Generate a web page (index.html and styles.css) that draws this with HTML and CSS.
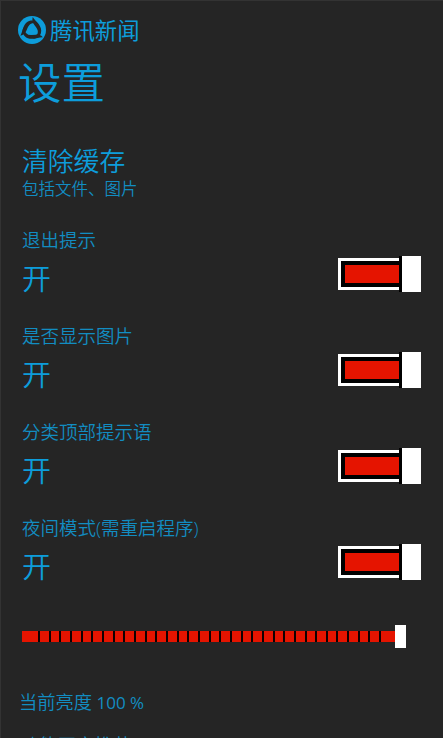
FILE: index.html
```html
<!DOCTYPE html>
<html lang="zh-CN">

<head>
    <meta charset="UTF-8">
    <meta name="viewport" content="width=device-width, initial-scale=1.0">
    <title>腾讯新闻 - 设置</title>
    <link rel="stylesheet" href="styles.css">
</head>

<body>
    <div class="page">
        <div class="brand">
            <svg class="logo" viewBox="0 0 28 28">
                <circle cx="14" cy="14" r="14" fill="#0d9ddb" />
                <g fill="#252525">
                    <path d="M2.4 19.8C5 16 4.6 6.4 12.6 4.6C17 3.8 20 6 20.6 9.6C17.6 6.6 13.6 6.6 11.2 9.2C8.4 12.4 8.6 18.4 2.4 19.8Z" />
                    <path d="M2.4 19.8C5 16 4.6 6.4 12.6 4.6C17 3.8 20 6 20.6 9.6C17.6 6.6 13.6 6.6 11.2 9.2C8.4 12.4 8.6 18.4 2.4 19.8Z" transform="rotate(120 14 14)" />
                    <path d="M2.4 19.8C5 16 4.6 6.4 12.6 4.6C17 3.8 20 6 20.6 9.6C17.6 6.6 13.6 6.6 11.2 9.2C8.4 12.4 8.6 18.4 2.4 19.8Z" transform="rotate(240 14 14)" />
                </g>
                <path fill="#0d9ddb" d="M14 9C16.6 9 17.6 10.8 17.9 13C19.6 14.4 19.4 17 17.6 18.4H10.4C8.6 17 8.4 14.4 10.1 13C10.4 10.8 11.4 9 14 9Z" />
            </svg>
            <span class="brand-name">腾讯新闻</span>
        </div>
        <h1>设置</h1>

        <div class="cache">
            <h2>清除缓存</h2>
            <p>包括文件、图片</p>
        </div>

        <div class="item">
            <div class="label">退出提示</div>
            <div class="row">
                <span class="state">开</span>
                <div class="switch"><div class="track"><div class="fill"></div></div><div class="thumb"></div></div>
            </div>
        </div>
        <div class="item">
            <div class="label">是否显示图片</div>
            <div class="row">
                <span class="state">开</span>
                <div class="switch"><div class="track"><div class="fill"></div></div><div class="thumb"></div></div>
            </div>
        </div>
        <div class="item">
            <div class="label">分类顶部提示语</div>
            <div class="row">
                <span class="state">开</span>
                <div class="switch"><div class="track"><div class="fill"></div></div><div class="thumb"></div></div>
            </div>
        </div>
        <div class="item">
            <div class="label">夜间模式(需重启程序)</div>
            <div class="row">
                <span class="state">开</span>
                <div class="switch"><div class="track"><div class="fill"></div></div><div class="thumb"></div></div>
            </div>
        </div>

        <!-- 亮度 -->
        <div class="slider">
            <div class="slider-first"></div>
            <div class="slider-ticks"></div>
            <div class="slider-last"></div>
            <div class="slider-thumb"></div>
        </div>
        <div class="brightness">当前亮度<span class="percent"> 100 %</span></div>
        <div class="more">功能正文推荐</div>
    </div>
</body>

</html>
```

FILE: styles.css
```css
* {
    box-sizing: border-box;
    margin: 0;
    padding: 0;
}

body {
    background-color: #252525;
    color: #0d9ddb;
    font-family: "Open Sans", "Noto Sans CJK SC", sans-serif;
    font-weight: 350;
}

.page {
    height: 738px;
    overflow: hidden;
    padding: 14px 22px 0 21px;
    border-left: 1px solid #333;
    border-top: 1px solid #333;
}

.brand {
    display: flex;
    align-items: center;
    height: 30px;
    margin-left: -4px;
}

.logo {
    width: 28px;
    height: 28px;
}

.brand-name {
    margin-left: 4px;
    padding-top: 2px;
    font-size: 22.4px;
    font-weight: 400;
    line-height: 28px;
}

h1 {
    height: 60px;
    margin: 8px 0 0 -4px;
    font-size: 43.5px;
    font-weight: 350;
    line-height: 59px;
}

.cache {
    height: 115px;
    margin-top: 31px;
}

.cache h2 {
    font-size: 25.8px;
    font-weight: 350;
    line-height: 34px;
}

.cache p {
    font-size: 16.5px;
    line-height: 22px;
    color: #128dc2;
}

.item {
    height: 96px;
}

.cache + .item {
    margin-top: -30px;
}

.label {
    font-size: 18.5px;
    line-height: 22px;
    white-space: nowrap;
    color: #128dc2;
}

.row {
    display: flex;
    justify-content: space-between;
    height: 50px;
}

.state {
    font-size: 29px;
    line-height: 56px;
}

.switch {
    display: flex;
    align-items: center;
    width: 83px;
    height: 36px;
    margin-top: 5px;
}

.track {
    width: 61px;
    height: 32px;
    background-color: #000;
    border: 3px solid #fff;
    border-right: none;
    padding: 4px 0 4px 4px;
}

.fill {
    height: 18px;
    background-color: #e51400;
}

.thumb {
    width: 22px;
    height: 36px;
    background-color: #fff;
    border-left: 3px solid #000;
}

.slider {
    display: flex;
    align-items: center;
    height: 23px;
    margin-top: 12px;
}

.slider-first {
    width: 16px;
    height: 11px;
    background-color: #e51400;
}

.slider-ticks {
    width: 343px;
    height: 11px;
    background: repeating-linear-gradient(to right, #100000 0, #100000 2px, #e51400 2px, #e51400 10.66px);
}

.slider-last {
    width: 14px;
    height: 11px;
    background-color: #e51400;
}

.slider-thumb {
    width: 11px;
    height: 23px;
    background-color: #fff;
}

.brightness {
    margin: 42px 0 0 -3px;
    font-size: 18.3px;
    line-height: 24px;
    color: #128dc2;
}

.percent {
    font-size: 17px;
    font-weight: 400;
}

.more {
    margin: 18px 0 0 -1px;
    font-size: 18.4px;
    line-height: 24px;
    color: #128dc2;
}
```
